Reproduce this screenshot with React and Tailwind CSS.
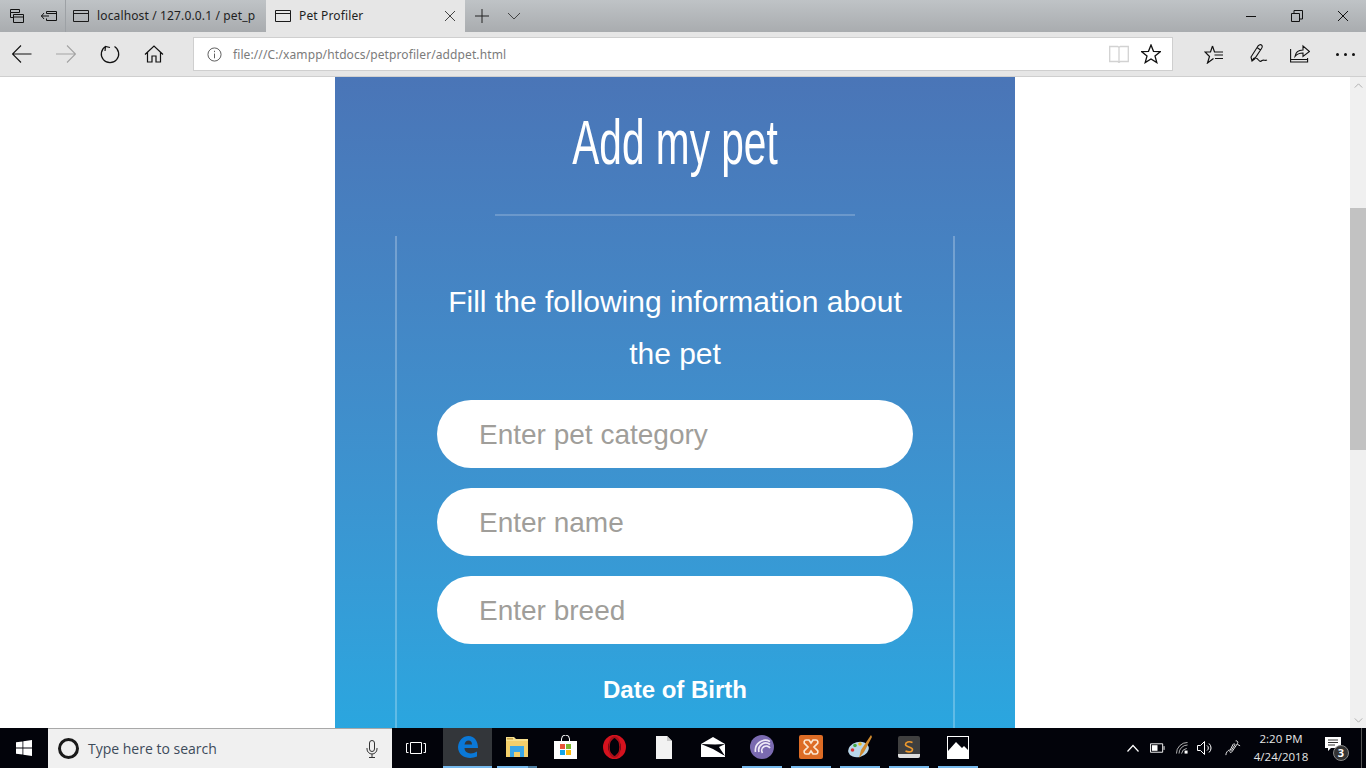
const Tab = ({ active, label, children }) => (
    <div
        className={`flex h-8 items-center ${
            active ? 'w-[199px] bg-[#e6e6e6] pl-[9px]' : 'w-[201px] border-l border-[#9da1a5] pl-[7px]'
        }`}
    >
        <svg viewBox="0 0 16 16" width="16" height="16" fill="none" stroke="#1a1a1a" className="shrink-0">
            <path d="M.5 2.500h15v11H.5zM.5 5.500h15" />
        </svg>
        <span className="ml-2 whitespace-nowrap text-[12px] text-[#1f1f1f] first-of-type:tracking-[0.14px]">{label}</span>
        {children}
    </div>
);

const TaskIcon = ({ running, active, extra, children }) => (
    <div className={`flex h-10 w-[49px] flex-col items-center ${active ? 'bg-[#33363a]' : ''}`}>
        <div className="flex flex-1 items-center justify-center">{children}</div>
        <div className="flex h-0.5 w-full justify-center">
            {running && (
                <div className={`h-0.5 bg-[#76b9ed] ${active ? 'w-full' : extra ? 'w-[31px]' : 'w-10'}`} />
            )}
            {extra && <div className="h-0.5 w-[9px] bg-[#4f7fa3]" />}
        </div>
    </div>
);

const PetInput = ({ placeholder }) => (
    <input
        placeholder={placeholder}
        className="h-[68px] w-full rounded-[34px] bg-white pl-[42px] pt-[2px] text-[28px] text-[#333] outline-none placeholder:text-[#a09e9a]"
    />
);

const TopBar = () => (
    <div className="flex h-8 bg-gradient-to-b from-[#bfc3c6] to-[#a9acaf]">
        <div className="flex w-[65px] items-center gap-4 pl-[9px]">
            <svg viewBox="0 0 16 16" width="16" height="16" fill="none" stroke="#111">
                <path d="M1.500 1.500h9v3h-9zM1.500 4.500v5h3M4.500 6.500h10v8h-10zM4.500 9h10" />
            </svg>
            <svg viewBox="0 0 16 16" width="16" height="16" fill="none" stroke="#111">
                <path d="M5.500 5.500v-2h10v9h-10v-2M0 8h8M3 5 .5 8 3 11M5.500 5.500h10" />
            </svg>
        </div>
        <Tab label="localhost / 127.0.0.1 / pet_p" />
        <Tab active label="Pet Profiler">
            <svg viewBox="0 0 12 12" width="12" height="12" fill="none" stroke="#444" className="ml-[81px]">
                <path d="M1 1l10 10M11 1 1 11" />
            </svg>
        </Tab>
        <div className="flex items-center pl-[10px]">
            <svg viewBox="0 0 14 14" width="14" height="14" fill="none" stroke="#222">
                <path d="M7 0v14M0 7h14" />
            </svg>
            <svg viewBox="0 0 14 8" width="14" height="8" fill="none" stroke="#444" className="ml-[18px]">
                <path d="M1 1l6 6 6-6" />
            </svg>
        </div>
        <div className="ml-auto flex items-center gap-[34px] pr-[17px]">
            <svg viewBox="0 0 12 12" width="12" height="12" fill="none" stroke="#111">
                <path d="M1 6.500h10" />
            </svg>
            <svg viewBox="0 0 12 12" width="12" height="12" fill="none" stroke="#111">
                <path d="M.5 3.500h8v8h-8zM3 3.500V.5h8.500V9H8.500" />
            </svg>
            <svg viewBox="0 0 12 12" width="12" height="12" fill="none" stroke="#111">
                <path d="M1 1l10 10M11 1 1 11" />
            </svg>
        </div>
    </div>
);

const ToolBar = () => (
    <div className="flex h-[45px] items-center border-b border-[#cfcfcf] bg-[#e6e6e6]">
        <div className="flex w-[193px] items-center pl-3">
            <svg viewBox="0 0 20 20" width="20" height="20" fill="none" stroke="#111" strokeWidth="1.100">
                <path d="M.5 10h19M9 1.500.5 10 9 18.500" />
            </svg>
            <svg viewBox="0 0 20 20" width="20" height="20" fill="none" stroke="#a3a3a3" strokeWidth="1.100" className="ml-[24px]">
                <path d="M0 10h19.500M11 1.500l8.500 8.500-8.500 8.500" />
            </svg>
            <svg viewBox="0 0 20 20" width="20" height="20" fill="none" stroke="#111" strokeWidth="1.200" className="ml-6">
                <path d="M5.500 2.500a8.700 8.700 0 1 0 9 0M10 3.500 5.500 2.500 5 7" />
            </svg>
            <svg viewBox="0 0 20 20" width="20" height="20" fill="none" stroke="#111" strokeWidth="1.200" className="ml-6">
                <path d="M1 10.500 10 2l9 8.500M3.500 8.500v9.500h4.500v-6h4v6h4.500V8.500" />
            </svg>
        </div>
        <div className="flex h-[34px] w-[980px] items-center border border-[#cfcfcf] bg-white pl-[13px] pr-[11px]">
            <svg viewBox="0 0 16 16" width="15" height="15" fill="none" stroke="#555">
                <circle cx="8" cy="8" r="7" />
                <path d="M8 7v5M8 4v1.500" />
            </svg>
            <span className="ml-[11px] mt-px text-[12px] tracking-[0.1px] text-[#7b7b7b]">file:///C:/xampp/htdocs/petprofiler/addpet.html</span>
            <svg viewBox="0 0 20 18" width="20" height="18" fill="none" stroke="#d2d2d2" strokeWidth="1.300" className="ml-auto">
                <path d="M.7 1.500h8l1.300 1 1.300-1h8v15h-8l-1.300 1-1.300-1h-8zM10 2.500v14" />
            </svg>
            <svg viewBox="0 0 20 20" width="20" height="20" fill="none" stroke="#111" strokeWidth="1.300" className="ml-[12px]">
                <path d="M10 1l2.500 6.300 6.800.4-5.300 4.300 1.800 6.600-5.800-3.700-5.800 3.700 1.800-6.600L.7 7.700l6.800-.4z" />
            </svg>
        </div>
        <div className="flex items-center pl-[31px]">
            <svg viewBox="0 0 20 20" width="20" height="20" fill="none" stroke="#111" strokeWidth="1.200">
                <path d="M8.500 2l2 6H19M10.500 11H19M11 14.500h8M9.500 14.500l-6 4.500 2-6.500L1 8h5.500L8.500 2" />
            </svg>
            <svg viewBox="0 0 20 20" width="20" height="20" fill="none" stroke="#111" strokeWidth="1.100" className="ml-[25px]">
                <path d="M3 17 2 13 9 2q2-2 3.500-1 1.500 1.500 0 3.500L5.500 15zM8 3.500l3.500 2.500M3.500 16C5 12 8 14 9.500 16c1.500 2 2.500 1.500 3.500.5 1.500-1 3 .5 5-.5" />
            </svg>
            <svg viewBox="0 0 20 20" width="20" height="20" fill="none" stroke="#111" strokeWidth="1.100" className="ml-[21px]">
                <path d="M.6 5v13h17v-4M.6 15.500h17M5 12.500c.5-4 3.500-6.500 8-6.500V2l6.500 5.500L13 12.500V9c-3 0-6 1-8 3.500z" />
            </svg>
            <div className="ml-[26px] flex gap-[5px]">
                <div className="h-[3px] w-[3px] rounded-full bg-[#111]" />
                <div className="h-[3px] w-[3px] rounded-full bg-[#111]" />
                <div className="h-[3px] w-[3px] rounded-full bg-[#111]" />
            </div>
        </div>
    </div>
);

const PetForm = () => (
    <div className="h-full w-[680px] overflow-hidden bg-gradient-to-b from-[#4a75b7] to-[#2aa6df] font-['Liberation_Sans',sans-serif] text-white">
        <h1 className="mt-7 h-[74px] origin-center scale-x-[0.645] text-center text-[63px] leading-[74px] font-normal">
            Add my pet
        </h1>
        <div className="mx-auto mt-[35px] h-0.5 w-[360px] bg-white/20" />
        <div className="mx-auto mt-5 h-full w-[560px] border-x-2 border-white/25 px-10 pt-10">
            <p className="text-center text-[30px] leading-[52px]">
                Fill the following information about the pet
            </p>
            <div className="mt-5 flex flex-col gap-5">
                <PetInput placeholder="Enter pet category" />
                <PetInput placeholder="Enter name" />
                <PetInput placeholder="Enter breed" />
            </div>
            <div className="mt-8 text-center text-[24px] leading-7 font-bold">Date of Birth</div>
        </div>
    </div>
);

const TaskBar = () => (
    <div className="flex h-10 items-stretch bg-[#02030a] font-['Open_Sans',sans-serif]">
        <div className="flex w-12 items-center justify-center">
            <svg viewBox="0 0 16 16" width="16" height="16" fill="#fff">
                <path d="M0 2.300 6.500 1.400v6.200H0zM7.300 1.300 16 0v7.600H7.300zM0 8.400h6.500v6.200L0 13.700zM7.300 8.400H16V16l-8.700-1.300z" />
            </svg>
        </div>
        <div className="flex w-[344px] items-center border-t border-[#a8a8a8] bg-[#f0f0f0] pl-[10px] pr-[14px]">
            <div className="h-[21px] w-[21px] rounded-full border-[3px] border-[#1a1a1a]" />
            <span className="ml-[9px] text-[14px] text-[#3d4b5a]">Type here to search</span>
            <svg viewBox="0 0 12 18" width="12" height="18" fill="none" stroke="#333" className="ml-auto">
                <path d="M3.500 3a2.500 2.500 0 0 1 5 0v6a2.500 2.500 0 0 1-5 0zM1 8v1a5 5 0 0 0 10 0V8M6 14v3.500M3 17.500h6" />
            </svg>
        </div>
        <div className="flex w-[51px] items-center justify-center pr-[3px]">
            <svg viewBox="0 0 20 14" width="20" height="14" fill="none" stroke="#fff">
                <path d="M4.500 1.500h11v11h-11zM2.500 2.500H.5v9h2M17.500 2.500h2v9h-2" />
            </svg>
        </div>
        <TaskIcon running active>
            <svg viewBox="0 0 20 22" width="20" height="22">
                <path d="M0 11C.5 4.500 5 0 10.500 0 16.500 0 20 5 20 12H6.500c0 5.500 7 7 12.500 3.500v5C11 24 0 21 0 11z" fill="#0a78d7" />
                <path d="M6.500 8.500H14C14 6 12.500 4.500 10.500 4.500 8.500 4.500 7 6 6.500 8.500z" fill="#33363a" />
            </svg>
        </TaskIcon>
        <TaskIcon running extra>
            <svg viewBox="0 0 22 20" width="22" height="20">
                <path d="M0 0h8l2 2h12v18H0z" fill="#f7e08e" />
                <path d="M0 4h22v16H0z" fill="#f3cf6b" />
                <path d="M4 9h14v11h-4v-5H8v5H4z" fill="#3aa6e6" />
                <path d="M1 1h6v1.500H1z" fill="#c9a24a" />
            </svg>
        </TaskIcon>
        <TaskIcon>
            <svg viewBox="0 0 23 24" width="23" height="24">
                <path d="M7.500 6V4a4 4 0 0 1 8 0v2" fill="none" stroke="#fff" />
                <path d="M0 6h23v18H0z" fill="#fff" />
                <path d="M6 9h5v5H6z" fill="#e8543a" />
                <path d="M12 9h5v5h-5z" fill="#7cb82f" />
                <path d="M6 15h5v5H6z" fill="#12a5e8" />
                <path d="M12 15h5v5h-5z" fill="#fbb80d" />
            </svg>
        </TaskIcon>
        <TaskIcon>
            <svg viewBox="0 0 23 24" width="23" height="24">
                <ellipse cx="11.500" cy="12" rx="9" ry="9.700" fill="none" stroke="#d5121e" strokeWidth="5" />
                <ellipse cx="11.500" cy="12" rx="4" ry="9" fill="#02030a" />
                <ellipse cx="11.500" cy="12" rx="5.500" ry="10" fill="none" stroke="#a60f18" strokeWidth="1.500" />
            </svg>
        </TaskIcon>
        <TaskIcon>
            <svg viewBox="0 0 16 23" width="16" height="23">
                <path d="M0 0h11l5 5v18H0z" fill="#f2f2f2" />
                <path d="M11 0v5h5z" fill="#c8c8c8" />
            </svg>
        </TaskIcon>
        <TaskIcon>
            <svg viewBox="0 0 24 20" width="24" height="20">
                <path d="M0 7 12 0l12 7v13H0z" fill="#fff" />
                <path d="M0 7l14 .5L24 7l-6 3 6 9-12-7z" fill="#02030a" />
                <path d="M0 8.500 11 14 24 19v1H0z" fill="#fff" />
            </svg>
        </TaskIcon>
        <TaskIcon running>
            <svg viewBox="0 0 24 24" width="24" height="24" fill="none">
                <circle cx="12" cy="12" r="12" fill="#7a6ab0" />
                <path d="M20 6.500A10 10 0 0 0 5.500 17M20 9.500A7 7 0 0 0 9 17M20 13a4 4 0 0 0-7.500 5" stroke="#efeaf7" strokeWidth="1.700" />
            </svg>
        </TaskIcon>
        <TaskIcon running>
            <svg viewBox="0 0 24 24" width="24" height="24" fill="none">
                <rect width="24" height="24" rx="2" fill="#dd6c25" />
                <path d="M7 5h3l2 3 2-3h3c2 0 2.500 3 1 4l-3 3 3 3c1.500 1 1 4-1 4h-3l-2-3-2 3H7c-2 0-2.500-3-1-4l3-3-3-3C4.500 8 5 5 7 5z" stroke="#fbe6d0" strokeWidth="1.700" />
            </svg>
        </TaskIcon>
        <TaskIcon running>
            <svg viewBox="0 0 24 24" width="24" height="24">
                <ellipse cx="10.500" cy="14.500" rx="10.500" ry="7.500" fill="#b9d7ea" transform="rotate(-15 10.500 14.500)" />
                <circle cx="4.500" cy="15" r="1.800" fill="#d33" />
                <circle cx="7" cy="10.500" r="1.800" fill="#4a4" />
                <circle cx="12" cy="9" r="1.800" fill="#e8b820" />
                <path d="M23 0 13 15l-2 8 5-6L24 2z" fill="#d08a2e" />
            </svg>
        </TaskIcon>
        <TaskIcon running>
            <svg viewBox="0 0 22 22" width="22" height="22">
                <rect width="22" height="22" rx="2" fill="#3f3f3f" />
                <path d="M0 18h22v2a2 2 0 0 1-2 2H2a2 2 0 0 1-2-2z" fill="#ddd" />
                <path d="M14.500 6.500C11 5 7.500 6 7.500 8.500S14.500 11 14.500 13.500 11 16.500 7.500 15" fill="none" stroke="#ef9a2e" strokeWidth="1.600" />
            </svg>
        </TaskIcon>
        <TaskIcon running>
            <svg viewBox="0 0 22 23" width="22" height="23">
                <path d="M0 0h22v23H0z" fill="#fff" />
                <path d="M1 1h20v13l-4-4-2 2-6-6-8 9z" fill="#02030a" />
            </svg>
        </TaskIcon>
        <div className="ml-auto flex items-center text-white">
            <svg viewBox="0 0 12 8" width="12" height="8" fill="none" stroke="#fff" strokeWidth="1.200">
                <path d="M.5 7.500 6 1.500l5.500 6" />
            </svg>
            <svg viewBox="0 0 16 10" width="15" height="10" fill="none" stroke="#fff" className="ml-[11px]">
                <path d="M.5.500h13v9H.5zM15 3v4" />
                <path d="M2 2h6v6H2z" fill="#fff" stroke="none" />
            </svg>
            <svg viewBox="0 0 14 14" width="12" height="12" fill="none" stroke="#ccc" className="ml-[11px]">
                <path d="M.5 13.500A13 13 0 0 1 13.500.5M3.500 13.500a10 10 0 0 1 10-10M6.500 13.500a7 7 0 0 1 6-6" />
                <path d="M10 10h3.500v3.500H10z" fill="#fff" stroke="none" />
            </svg>
            <svg viewBox="0 0 16 14" width="16" height="14" fill="none" stroke="#fff" className="ml-[9px]">
                <path d="M.5 4.500h3l4-4v13l-4-4h-3zM10 4.500a3 3 0 0 1 0 5M12 2.500a6 6 0 0 1 0 9" />
            </svg>
            <svg viewBox="0 0 18 18" width="16" height="16" fill="none" stroke="#fff" className="ml-[12px]">
                <path d="M12 1c2-.5 3 1.500 2 3L8 13c-1.500 2-3 1-2.500-1L9 5c1-1.500 2.500-.5 2 .5L7 12M14 5l3 1.500M1 17c0-3 2-5 4-6" />
            </svg>
            <div className="ml-[3px] flex w-[74px] flex-col items-center text-[11.500px] leading-[18px] text-[#e6e6e6]">
                <span>2:20 PM</span>
                <span>4/24/2018</span>
            </div>
            <div className="relative ml-[7px] mr-3 h-[26px] w-6 pt-[2px]">
                <svg viewBox="0 0 16 14" width="16" height="14">
                    <path d="M0 0h16v11H6l-3 3v-3H0z" fill="#fff" />
                    <path d="M3 3h10M3 5.500h10M3 8h7" stroke="#333" />
                </svg>
                <span className="absolute right-0 bottom-0 flex h-4 w-4 items-center justify-center rounded-full border border-[#888] bg-[#333] text-[11px] font-bold text-white">
                    3
                </span>
            </div>
            <div className="h-full w-px bg-[#555]" />
            <div className="w-1" />
        </div>
    </div>
);

export default function App() {
    return (
        <div className="flex h-[768px] w-[1366px] flex-col overflow-hidden bg-white font-['Noto_Sans',sans-serif]">
            <TopBar />
            <ToolBar />
            <div className="flex min-h-0 flex-1">
                <div className="flex min-w-0 flex-1 justify-center">
                    <PetForm />
                </div>
                <div className="flex w-4 flex-col bg-[#f0f0f0]">
                    <div className="flex h-4 items-center justify-center">
                        <svg viewBox="0 0 10 6" width="9" height="5" fill="none" stroke="#a5a5a5">
                            <path d="M.5 5.500 5 1l4.500 4.500" />
                        </svg>
                    </div>
                    <div className="mt-[115px] h-[242px] bg-[#c2c2c2]" />
                    <div className="mt-auto flex h-4 items-center justify-center">
                        <svg viewBox="0 0 10 6" width="9" height="5" fill="none" stroke="#a5a5a5">
                            <path d="M.5.500 5 5l4.500-4.500" />
                        </svg>
                    </div>
                </div>
            </div>
            <TaskBar />
        </div>
    );
}
